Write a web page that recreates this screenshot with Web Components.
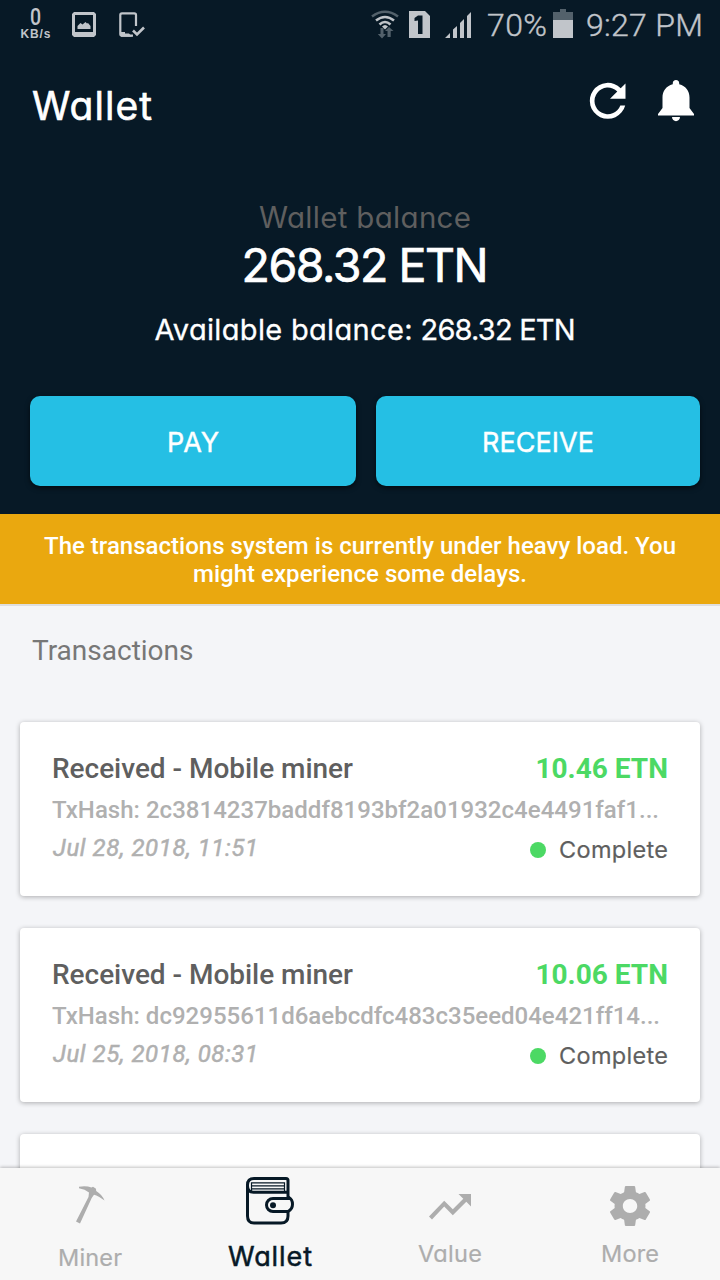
<!DOCTYPE html>
<html lang="en">
<head>
<meta charset="utf-8">
<title>Wallet</title>
<style>
html,body{margin:0;height:100%;overflow:hidden;background:#f4f5f8}
body{font-family:Roboto,"Liberation Sans",sans-serif}
</style>
</head>
<body>
<wallet-app></wallet-app>
<script>
const define = (name, html, setup) => customElements.define(name, class extends HTMLElement {
  constructor() {
    super();
    this.attachShadow({ mode: 'open' });
  }
  connectedCallback() {
    this.shadowRoot.innerHTML = typeof html === 'function' ? html(this) : html;
    if (setup) setup(this);
  }
});

/* Text tracked out or in until its line measures exactly `w` pixels. */
define('fit-text', `<style>
:host{display:inline-block;white-space:pre}
:host([round]){font-family:Inter,Lato,sans-serif;font-feature-settings:"cv11"}
span{display:inline-block}
</style><span><slot></slot></span>`, el => {
  const span = el.shadowRoot.querySelector('span');
  const w = +el.getAttribute('w'), n = el.textContent.length;
  const ls = (w - span.getBoundingClientRect().width) / (n - 1);
  span.style.letterSpacing = ls + 'px';
  span.style.marginRight = -ls + 'px';
});

const icons = {
  picture: [24, 26, '<path fill="#c1c5ca" fill-rule="evenodd" d="M2 0h20l2 2v21l-2 2H2l-2-2V2zM3 3v17h18V3z"/><path fill="#c1c5ca" d="M5.500 17v-3l3-3 2 1.500 3-2.500 1.500 1.500 1-.5 2.500 3v3z"/>'],
  device: [26, 26, '<path fill="none" stroke="#c1c5ca" stroke-width="2.200" d="M17 14V3q0-1.700-1.700-1.700H3Q1.300 1.300 1.300 3v19q0 1.700 1.700 1.700h11"/><path fill="#c1c5ca" d="M1 20h5v1.500h4l3 3.300H2z"/><path fill="none" stroke="#c1c5ca" stroke-width="2.600" d="M14 18.500l4 4L25 15.500"/>'],
  wifi: [28, 30, '<g fill="none" stroke-width="2.600"><path stroke="#53616b" d="M1 6.500Q14-3 27 6.500"/><path stroke="#c1c5ca" d="M5 10.500q9-7 18 0M8.500 14.500q5.500-5 11 0"/></g><path fill="#c1c5ca" d="M11 16.500q3-3 6 0l-3 3z"/><path fill="#53616b" d="M9.500 18h3v6h2.500L11 28.500 6.800 24h2.700zM16.500 27v-6H14l4-4 4.500 4h-2.800v6z"/>'],
  sim: [21, 27, '<path fill="#c1c5ca" d="M0 0h16l5 5v22H0z"/><path fill="#071926" d="M9 4.500h4.500V23H9V9.500L5.500 10V7z"/>'],
  signal: [26, 26, '<path fill="#c1c5ca" d="M0 26l5-5v5zM8 26V17.500l4-3.500v12zM15 26V11l4-4v19zM22 26V4l4-4v26z"/>'],
  battery: [20, 29, '<path fill="#53616b" d="M7 0h6v3h7v8H0V3h7z"/><path fill="#c1c5ca" d="M0 11h20v18H0z"/>'],
  refresh: [36, 36, '<path fill="#fff" d="M30.700 5.300A18 18 0 1 0 35.200 22.400h-4.900A13.300 13.300 0 1 1 27.300 8.600L20 15.800h15.500V.5z"/>'],
  bell: [36, 42, '<path fill="#fff" d="M18 0c2 0 3.200 1.400 3.200 3v1.200C28 6 31.500 11 31.500 17.500V28l4.500 6v1.500H0V34l4.500-6V17.500C4.500 11 8 6 14.800 4.200V3c0-1.600 1.200-3 3.200-3zM14 37h8c0 5.500-8 5.500-8 0z"/>'],
  pick: [28, 38, '<path fill="#adadad" d="M3 .8Q10-.6 15.500 1.600L17 .8l3 2 .2 2.200Q26 8.500 28.500 14.500q-6-4.500-10.500-5.700l-2.300 3.200L4 37.500 0 35.500 12.500 11l.5-4.500Q9 3 3 2.200z"/>'],
  wallet: [48, 48, '<g fill="none" stroke="#071926" stroke-width="3"><path d="M42 35v4q0 7-7 7H8q-6.500 0-6.500-7V8q0-6.500 6.500-6.500h32q2 0 2 2V22"/><path d="M1.500 9q0 6.300 6 6.300H42"/><path d="M43 21.500H27a6.500 6.500 0 0 0 0 13h15q4.500-2.300 4.500-7.200T43 20.500z"/></g><g fill="none" stroke="#071926" stroke-width="1.200"><path d="M5.500 15V5.800h33V15M5.500 8.800h33M5.500 11.800h33"/></g><circle cx="27" cy="28.200" r="3" fill="#071926"/>'],
  trend: [42, 26, '<path fill="#adadad" d="M29.500 0H42v12.500l-4.700-4.700L23.800 21.200l-8.600-8.600L3 25.500 0 22.500 15.200 6.700l8.600 8.600L34.300 4.800z"/>'],
  gear: [40, 40, '<path fill="#adadad" fill-rule="evenodd" transform="translate(-4.700 -4) scale(2.060 2)" d="M19.430 12.980c.04-.32.07-.64.07-.98s-.03-.66-.07-.98l2.110-1.650c.19-.15.24-.42.12-.64l-2-3.460c-.12-.22-.39-.3-.61-.22l-2.490 1c-.52-.4-1.080-.73-1.690-.98l-.38-2.650C14.460 2.180 14.250 2 14 2h-4c-.25 0-.46.18-.49.42l-.38 2.650c-.61.25-1.170.59-1.690.98l-2.490-1c-.23-.09-.49 0-.61.22l-2 3.460c-.13.22-.07.49.12.64l2.110 1.650c-.04.32-.07.65-.07.98s.03.66.07.98l-2.110 1.650c-.19.15-.24.42-.12.64l2 3.460c.12.22.39.3.61.22l2.490-1c.52.4 1.080.73 1.690.98l.38 2.650c.03.24.24.42.49.42h4c.25 0 .46-.18.49-.42l.38-2.650c.61-.25 1.170-.59 1.690-.98l2.490 1c.23.09.49 0 .61-.22l2-3.460c.12-.22.07-.49-.12-.64l-2.110-1.650zM12 15.500c-1.930 0-3.500-1.570-3.500-3.500s1.570-3.500 3.500-3.500 3.500 1.570 3.500 3.500-1.570 3.500-3.500 3.500z"/>']
};
define('app-icon', el => {
  const [w, h, body] = icons[el.getAttribute('name')];
  return `<style>:host{display:block;flex:none;width:${w}px;height:${h}px}svg{display:block;overflow:visible}</style><svg width="${w}" height="${h}" viewBox="0 0 ${w} ${h}">${body}</svg>`;
});

define('status-bar', `<style>
:host{display:flex;align-items:flex-start;height:50px;padding:0 17px 0 20px;color:#c1c5ca;font-size:32px;line-height:50px;font-weight:300;box-sizing:border-box}
.clock{-webkit-text-stroke:.4px}
.speed{width:31px;display:flex;flex-direction:column;align-items:center;font:bold 12px/12px "Liberation Sans",sans-serif;padding-top:8px}
.zero{font:500 23px/20px Roboto,sans-serif;transform:scaleX(.85)}
.grow{flex:1}
</style>
<div class="speed"><span class="zero">0</span><fit-text w="30">KB/s</fit-text></div>
<app-icon name="picture" style="margin:12px 0 0 21px"></app-icon>
<app-icon name="device" style="margin:12px 0 0 23px"></app-icon>
<div class="grow"></div>
<app-icon name="wifi" style="margin:10px 10px 0 0"></app-icon>
<app-icon name="sim" style="margin:11px 15px 0 0"></app-icon>
<app-icon name="signal" style="margin:12px 16px 0 0"></app-icon>
<fit-text class="clock" w="60">70%</fit-text>
<app-icon name="battery" style="margin:9px 13px 0 6px"></app-icon>
<fit-text class="clock" w="117">9:27 PM</fit-text>`);

define('app-bar', el => `<style>
:host{display:flex;height:110px;box-sizing:border-box;color:#fff;padding:0 26px 0 32px;align-items:center}
fit-text{font-size:39px;font-weight:400;line-height:48px;-webkit-text-stroke:.6px;padding-top:2px}
.grow{flex:1}
app-icon{margin:-9px 0 0 32px}
</style><fit-text round w="120">${el.getAttribute('heading')}</fit-text><div class="grow"></div>
<app-icon name="refresh"></app-icon><app-icon name="bell" style="margin-top:-8px"></app-icon>`);

define('balance-panel', `<style>
:host{display:flex;flex-direction:column;align-items:center;height:236px;box-sizing:border-box;padding:39px 20px 0 30px;color:#fff}
.label{font-size:29.500px;line-height:36px;color:#5f5f5f}
.total{font-size:46.500px;line-height:56px;font-weight:400;margin-top:2px;-webkit-text-stroke:.7px}
.available{font-size:29px;line-height:36px;margin-top:19px;font-weight:400;-webkit-text-stroke:.3px}
</style>
<fit-text round class="label" w="212">Wallet balance</fit-text>
<fit-text round class="total" w="247">268.32 ETN</fit-text>
<div class="available"><fit-text round w="258">Available balance:</fit-text><fit-text round w="155" style="margin-left:8px">268.32 ETN</fit-text></div>`);

define('action-button', `<style>
:host{display:flex;align-items:center;justify-content:center;height:90px;border-radius:10px;background:#25bfe4;color:#fff;font-size:27px;line-height:36px;box-shadow:0 2px 5px #0009;padding-top:3px;box-sizing:border-box;font-weight:400;-webkit-text-stroke:.4px}
</style><slot></slot>`);

define('notice-banner', `<style>
:host{display:block;height:90px;box-sizing:border-box;padding-top:18px;background:#eaa80f;color:#fff;font-size:24px;line-height:28px;font-weight:500;text-align:center;box-shadow:0 2px #dededf}
div{height:28px}
</style><div><fit-text w="632">The transactions system is currently under heavy load. You</fit-text></div><div><fit-text w="334">might experience some delays.</fit-text></div>`);

define('transaction-card', el => {
  const a = k => el.getAttribute(k);
  return `<style>
:host{display:block;height:174px;box-sizing:border-box;padding:30px 32px 0;background:#fff;border-radius:4px;box-shadow:0 1px 5px #0000004d;flex:none}
.row{display:flex;justify-content:space-between}
.top{font-size:28px;line-height:34px;font-weight:500;color:#5f5f5f}
.amount{color:#4cd964;font-weight:700}
.hash{font-size:24px;line-height:30px;font-weight:500;color:#b0b0b0;margin-top:9px;height:30px}
.bottom{font-size:24px;line-height:30px;margin-top:8px;color:#b0b0b0}
.date{font-style:italic;margin-left:1px;-webkit-text-stroke:.5px}
.state{display:flex;align-items:center;color:#5f5f5f;font-size:23.500px;gap:13px;margin-top:2px;-webkit-text-stroke:.2px}
.state i{width:16px;height:16px;border-radius:50%;background:#4cd964}
</style>
<div class="row top"><fit-text w="301">Received - Mobile miner</fit-text><fit-text class="amount" w="132.5">${a('amount')}</fit-text></div>
<div class="hash"><fit-text w="${a('hash-width')}">TxHash: ${a('hash')}...</fit-text></div>
<div class="row bottom"><fit-text class="date" w="205">${a('date')}</fit-text><div class="state"><i></i><fit-text round w="109">Complete</fit-text></div></div>`;
});

define('nav-tab', el => `<style>
:host{display:flex;flex-direction:column;align-items:center;flex:1;color:#adadad;font-size:23.500px;line-height:30px;-webkit-text-stroke:.2px}
:host([active]){color:#071926;font-size:27px;-webkit-text-stroke:.5px}
.icon{height:${el.getAttribute('label-top')}px;width:100%;display:flex;justify-content:center;align-items:flex-start}
app-icon{margin-top:${el.getAttribute('icon-top')}px}
</style><div class="icon"><app-icon name="${el.getAttribute('icon')}"></app-icon></div><fit-text round w="${el.getAttribute('w')}">${el.getAttribute('label')}</fit-text>`);

define('tab-bar', `<style>:host{display:flex;height:112px;background:#f7f7f7;box-shadow:0 -1px 3px #0000003d;position:relative;flex:none}</style><slot></slot>`);

define('wallet-app', `<style>
:host{display:flex;flex-direction:column;width:720px;height:1280px;overflow:hidden;background:#f4f5f8}
header{background:#071926;height:514px;flex:none}
.actions{display:grid;grid-template-columns:326px 324px;gap:20px;padding:0 20px 0 30px}
notice-banner{flex:none}
main{flex:1;min-height:0;overflow:hidden;display:flex;flex-direction:column;padding:0 20px}
h2{font-size:28px;line-height:34px;font-weight:400;color:#777;margin:30px 0 54px 12px;height:34px;flex:none}
transaction-card{margin-bottom:32px}
.next{height:60px;flex:none;background:#fff;border-radius:4px 4px 0 0;box-shadow:0 1px 5px #0000004d}
</style>
<header>
<status-bar></status-bar>
<app-bar heading="Wallet"></app-bar>
<balance-panel></balance-panel>
<div class="actions"><action-button><fit-text round w="52">PAY</fit-text></action-button><action-button><fit-text round w="112">RECEIVE</fit-text></action-button></div>
</header>
<notice-banner></notice-banner>
<main>
<h2><fit-text w="161.5">Transactions</fit-text></h2>
<transaction-card amount="10.46 ETN" hash="2c3814237baddf8193bf2a01932c4e4491faf1" hash-width="607" date="Jul 28, 2018, 11:51"></transaction-card>
<transaction-card amount="10.06 ETN" hash="dc92955611d6aebcdfc483c35eed04e421ff14" hash-width="608" date="Jul 25, 2018, 08:31"></transaction-card>
<div class="next"></div>
</main>
<tab-bar>
<nav-tab icon="pick" icon-top="18" label-top="75" label="Miner" w="64"></nav-tab>
<nav-tab icon="wallet" icon-top="9" label-top="74" label="Wallet" w="84" active></nav-tab>
<nav-tab icon="trend" icon-top="26" label-top="71" label="Value" w="64"></nav-tab>
<nav-tab icon="gear" icon-top="18" label-top="71" label="More" w="58"></nav-tab>
</tab-bar>`);
</script>
</body>
</html>
